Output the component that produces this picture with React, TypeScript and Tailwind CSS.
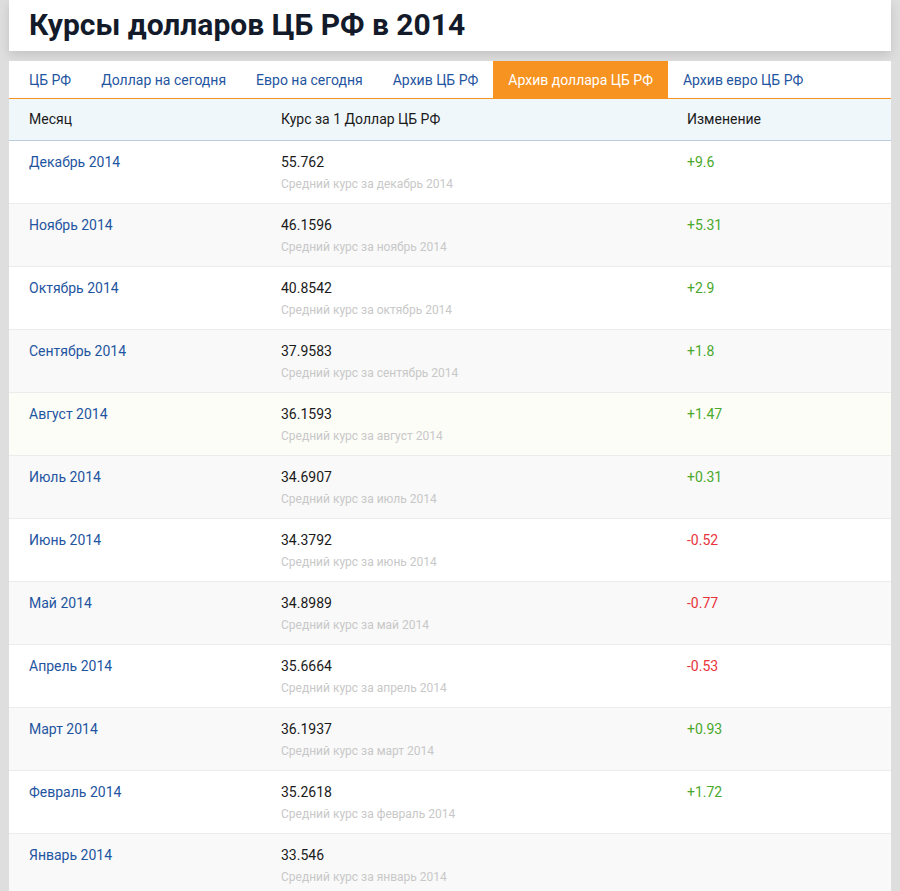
const tabs = [
  "ЦБ РФ",
  "Доллар на сегодня",
  "Евро на сегодня",
  "Архив ЦБ РФ",
  "Архив доллара ЦБ РФ",
  "Архив евро ЦБ РФ",
]

const rows = [
  { month: "Декабрь", gen: "декабрь", rate: "55.762", diff: "+9.6" },
  { month: "Ноябрь", gen: "ноябрь", rate: "46.1596", diff: "+5.31" },
  { month: "Октябрь", gen: "октябрь", rate: "40.8542", diff: "+2.9" },
  { month: "Сентябрь", gen: "сентябрь", rate: "37.9583", diff: "+1.8" },
  { month: "Август", gen: "август", rate: "36.1593", diff: "+1.47" },
  { month: "Июль", gen: "июль", rate: "34.6907", diff: "+0.31" },
  { month: "Июнь", gen: "июнь", rate: "34.3792", diff: "-0.52" },
  { month: "Май", gen: "май", rate: "34.8989", diff: "-0.77" },
  { month: "Апрель", gen: "апрель", rate: "35.6664", diff: "-0.53" },
  { month: "Март", gen: "март", rate: "36.1937", diff: "+0.93" },
  { month: "Февраль", gen: "февраль", rate: "35.2618", diff: "+1.72" },
  { month: "Январь", gen: "январь", rate: "33.546", diff: "" },
]

export default function App() {
  return (
    <div className="min-h-[891px] bg-[#dedede] px-[9px] font-['Roboto',sans-serif]">
      <div className="bg-white h-[51px] pl-5 flex items-center shadow-[0_4px_10px_rgba(0,0,0,0.12)]">
        <h1 className="text-[30px] font-bold text-[#131a2a] leading-none -mt-[2px]">Курсы долларов ЦБ РФ в 2014</h1>
      </div>

      <div className="mt-[10px] bg-white">
        <nav className="flex px-[5px] h-[38px] border-b border-[#f79321]">
          {tabs.map((t, i) => (
            <div
              key={i}
              className={
                i === 4
                  ? "px-[15px] pt-[1px] flex items-center text-[14px] bg-[#f79321] text-white"
                  : "px-[15px] pt-[1px] flex items-center text-[14px] text-[#1f55a0]"
              }
            >
              {t}
            </div>
          ))}
        </nav>

        <div className="flex h-[42px] items-center bg-[#f0f7fb] border-b border-[#b9cddd] text-[14px] text-[#1a1a1a]">
          <div className="w-[272px] pl-5">Месяц</div>
          <div className="w-[406px]">Курс за 1 Доллар ЦБ РФ</div>
          <div>Изменение</div>
        </div>

        {rows.map((r, i) => (
          <div
            key={r.month}
            className={
              "flex h-[63px] pt-[12px] border-b border-[#ececec] text-[14px] " +
              (i === 4 ? "bg-[#fdfdf8]" : i % 2 === 1 ? "bg-[#f9f9f9]" : "bg-white")
            }
          >
            <div className="w-[272px] pl-5 text-[#1f55a0] leading-[18px]">{r.month} 2014</div>
            <div className="w-[406px]">
              <div className="text-[#1a1a1a] leading-[18px]">{r.rate}</div>
              <div className="text-[12px] text-[#c8c8c8] mt-[6px] leading-[14px]">Средний курс за {r.gen} 2014</div>
            </div>
            <div className={r.diff.startsWith("-") ? "text-[#e8333b] leading-[18px]" : "text-[#4aa82b] leading-[18px]"}>
              {r.diff}
            </div>
          </div>
        ))}
      </div>
    </div>
  )
}
